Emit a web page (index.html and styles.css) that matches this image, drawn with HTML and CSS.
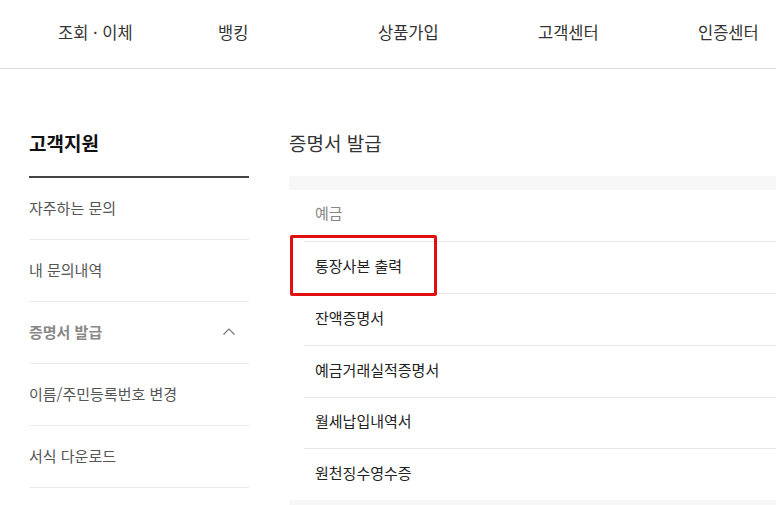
FILE: index.html
```html
<!DOCTYPE html>
<html lang="ko">
<head>
<meta charset="utf-8">
<title>증명서 발급</title>
<link rel="stylesheet" href="styles.css">
</head>
<body>
<header class="gnb">
  <nav class="gnb-list">
    <a class="gnb-item">조회 · 이체</a>
    <a class="gnb-item">뱅킹</a>
    <a class="gnb-item">상품가입</a>
    <a class="gnb-item">고객센터</a>
    <a class="gnb-item">인증센터</a>
  </nav>
</header>
<main class="layout">
  <aside class="side">
    <h2 class="side-title">고객지원</h2>
    <ul class="side-menu">
      <li class="side-item">자주하는 문의</li>
      <li class="side-item">내 문의내역</li>
      <li class="side-item side-item--open">
        <span>증명서 발급</span>
        <svg class="chev" width="12" height="8" viewBox="0 0 12 8" aria-hidden="true"><path d="M0.5 7.5 L6 2 L11.5 7.5" fill="none" stroke="#777" stroke-width="1.2"/></svg>
      </li>
      <li class="side-item">이름/주민등록번호 변경</li>
      <li class="side-item">서식 다운로드</li>
    </ul>
  </aside>
  <section class="content">
    <h3 class="content-title">증명서 발급</h3>
    <div class="panel">
      <ul class="doc-list">
        <li class="doc-item doc-item--label">예금</li>
        <li class="doc-item">통장사본 출력</li>
        <li class="doc-item">잔액증명서</li>
        <li class="doc-item">예금거래실적증명서</li>
        <li class="doc-item">월세납입내역서</li>
        <li class="doc-item">원천징수영수증</li>
      </ul>
      <div class="highlight"></div>
    </div>
  </section>
</main>
</body>
</html>
```

FILE: styles.css
```css
* { box-sizing: border-box; }
html, body { margin: 0; padding: 0; overflow: hidden; }
body {
  width: 776px;
  height: 505px;
  background: #fff;
  font-family: "Noto Sans CJK KR", "Noto Sans", sans-serif;
  color: #333;
}
ul { list-style: none; margin: 0; padding: 0; }
h2, h3 { margin: 0; }

.gnb {
  height: 69px;
  border-bottom: 1px solid #dedede;
}
.gnb-list {
  display: grid;
  grid-template-columns: repeat(5, 160px);
  padding-left: 58px;
  height: 68px;
  align-items: center;
}
.gnb-item {
  font-size: 16.5px;
  line-height: 22px;
  color: #333;
  white-space: nowrap;
  margin-top: -4px;
}

.layout {
  display: flex;
  padding-left: 29px;
  gap: 40px;
}
.side { width: 220px; flex: none; }
.side-title {
  padding-top: 61px;
  padding-bottom: 20px;
  font-size: 19px;
  line-height: 26px;
  font-weight: 700;
  color: #111;
  border-bottom: 2px solid #444;
}
.side-item {
  height: 62px;
  border-bottom: 1px solid #ececec;
  display: flex;
  align-items: center;
  justify-content: space-between;
  font-size: 15px;
  color: #555;
  padding-right: 14px;
  padding-bottom: 3px;
}
.side-item--open { font-weight: 700; color: #888; }
.chev { margin-top: 0; }

.content { flex: 1; min-width: 0; }
.content-title {
  padding-top: 61px;
  padding-bottom: 20px;
  font-size: 19px;
  line-height: 26px;
  font-weight: 400;
  color: #333;
}
.panel {
  position: relative;
  border-top: 14px solid #f7f7f7;
  border-bottom: 14px solid #f7f7f7;
  padding-left: 15px;
}
.doc-item {
  height: 52px;
  border-bottom: 1px solid #e6e6e6;
  display: flex;
  align-items: center;
  padding-left: 11px;
  padding-bottom: 5px;
  font-size: 15px;
  color: #222;
}
.doc-item:nth-child(5) { height: 51px; }
.doc-item:last-child { border-bottom: 0; height: 51px; }
.doc-item--label { color: #888; padding-bottom: 6px; }

.highlight {
  position: absolute;
  left: 1px;
  top: 45px;
  width: 147px;
  height: 61px;
  border: 3px solid #e01010;
  border-radius: 2px;
  pointer-events: none;
}
```
